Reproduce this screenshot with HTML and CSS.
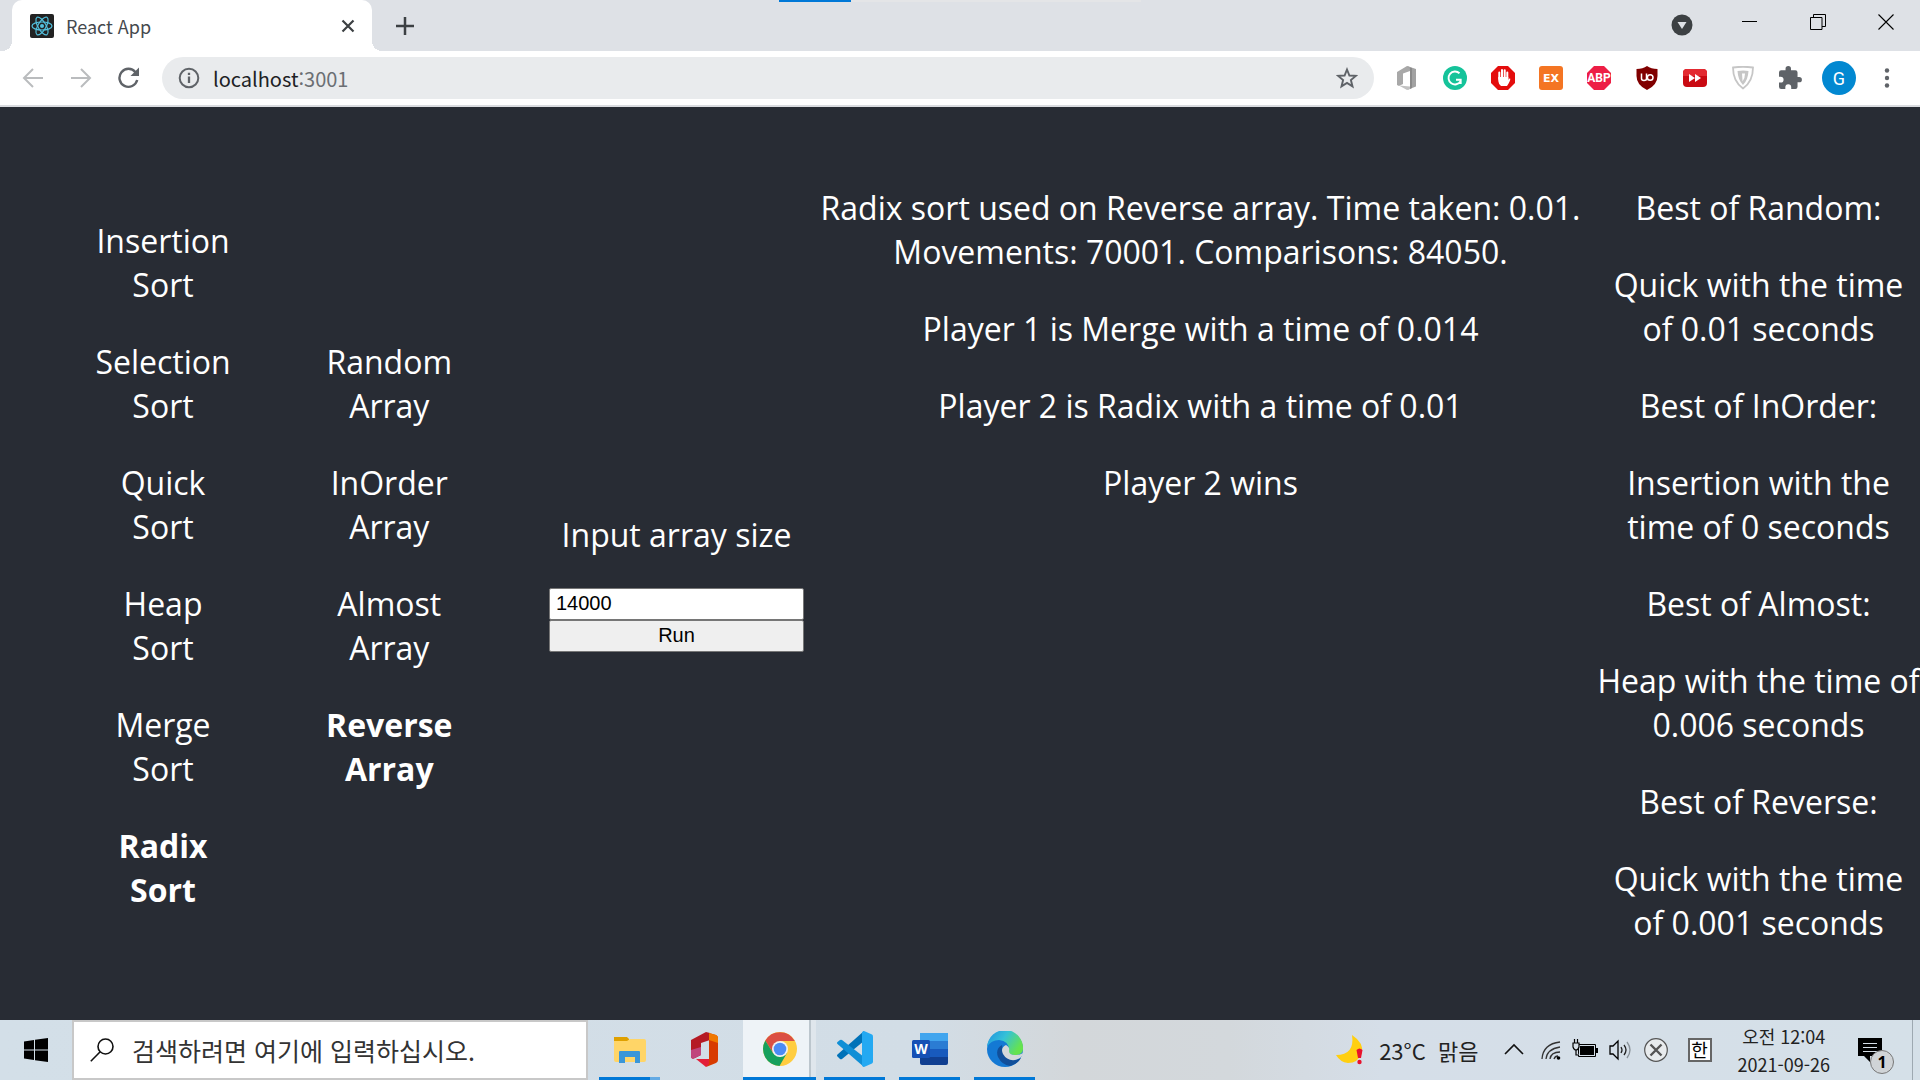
FILE: index.html
```html
<!DOCTYPE html>
<html lang="ko">
<head>
<meta charset="utf-8">
<title>React App</title>
<meta name="viewport" content="width=device-width, initial-scale=1">
<link rel="stylesheet" href="styles.css">
</head>
<body>
<div class="desktop">

<header class="browser">
  <div class="tabstrip">
    <div class="tab">
      <svg class="favicon" viewBox="0 0 24 24" aria-hidden="true"><rect width="24" height="24" rx="2" fill="#222"/><g fill="none" stroke="#53c1de" stroke-width="1.2"><ellipse cx="12" cy="12" rx="10" ry="4"/><ellipse cx="12" cy="12" rx="10" ry="4" transform="rotate(60 12 12)"/><ellipse cx="12" cy="12" rx="10" ry="4" transform="rotate(120 12 12)"/></g><circle cx="12" cy="12" r="2" fill="#53c1de"/></svg>
      <span class="tab-title">React App</span>
      <button class="icon-button" aria-label="Close tab"><svg width="14" height="14" viewBox="0 0 14 14"><path d="M1.500 1.500l11 11M12.500 1.500l-11 11" stroke="#3c4043" stroke-width="2.200" fill="none"/></svg></button>
    </div>
    <button class="icon-button new-tab" aria-label="New tab"><svg width="18" height="18" viewBox="0 0 18 18"><path d="M9 0v18M0 9h18" stroke="#3c4043" stroke-width="2.500"/></svg></button>
    <div class="load-bar"></div>
    <div class="window-controls">
      <button class="icon-button" aria-label="Search tabs"><svg width="22" height="22" viewBox="0 0 22 22"><circle cx="11" cy="11" r="10.500" fill="#3c4043"/><path d="M6.500 8h9l-4.500 7z" fill="#dee1e6"/></svg></button>
      <button class="icon-button" aria-label="Minimize"><svg width="16" height="16" viewBox="0 0 16 16"><path d="M0 7.500h15" stroke="#000"/></svg></button>
      <button class="icon-button" aria-label="Restore"><svg width="16" height="16" viewBox="0 0 16 16"><path d="M.5 3.500h11.500v12H.5zM3.500 3.500V.5h12v12h-3.500" stroke="#000" fill="none"/></svg></button>
      <button class="icon-button" aria-label="Close window"><svg width="16" height="16" viewBox="0 0 16 16"><path d="M.5.5l15 15M15.500.5l-15 15" stroke="#000" stroke-width="1.100"/></svg></button>
    </div>
  </div>

  <div class="toolbar">
    <nav class="nav-buttons">
      <button class="icon-button" aria-label="Back"><svg width="22" height="20" viewBox="0 0 22 20"><path d="M21 10H2M11 1L2 10l9 9" stroke="#babcbe" stroke-width="2" fill="none"/></svg></button>
      <button class="icon-button" aria-label="Forward"><svg width="22" height="20" viewBox="0 0 22 20"><path d="M1 10h19M11 1l9 9-9 9" stroke="#babcbe" stroke-width="2" fill="none"/></svg></button>
      <button class="icon-button" aria-label="Reload"><svg width="22" height="22" viewBox="0 0 22 22"><path d="M17.500 5.200A9 9 0 1 0 19.200 13" stroke="#5f6368" stroke-width="2.400" fill="none"/><path d="M21 .5V9h-8.500z" fill="#5f6368"/></svg></button>
    </nav>
    <div class="omnibox">
      <svg width="22" height="22" viewBox="0 0 22 22" aria-hidden="true"><circle cx="11" cy="11" r="9.300" fill="none" stroke="#5f6368" stroke-width="2"/><path d="M11 9.500v6.500M11 5.800v2.300" stroke="#5f6368" stroke-width="2.300"/></svg>
      <span class="url" role="textbox" aria-label="Address">localhost<span class="port">:3001</span></span>
      <button class="icon-button" aria-label="Bookmark"><svg width="22" height="22" viewBox="0 0 22 22"><path d="M11 2.500l2.400 6 6.400.4-4.900 4.200 1.600 6.300-5.500-3.500-5.500 3.500 1.600-6.300L2.200 8.900l6.400-.4z" fill="none" stroke="#5f6368" stroke-width="1.900"/></svg></button>
    </div>
    <div class="extensions">
      <button class="icon-button" aria-label="Office"><svg width="24" height="24" viewBox="0 0 24 24"><path d="M2 6L12 0l3 1v4L8 7.500V18l-4 2-2-1z" fill="#a8a8a8"/><path d="M12 0l9 3v17.500L12 24l3-3V4z" fill="#a2a2a2"/><path d="M15 1.500l2 .5v20l-2 1z" fill="#8a8a8a"/><path d="M4 19.500l11 1V23l-3 1z" fill="#c2c2c2"/></svg></button>
      <button class="icon-button" aria-label="Grammarly"><svg width="24" height="24" viewBox="0 0 24 24"><circle cx="12" cy="12" r="12" fill="#15c39a"/><path d="M16.500 7.200A6.500 6.500 0 1 0 17.600 15.300M13 13.700h4.700V18" fill="none" stroke="#fff" stroke-width="1.900"/></svg></button>
      <button class="icon-button" aria-label="AdBlock"><svg width="24" height="24" viewBox="0 0 24 24"><path d="M7 0h10l7 7v10l-7 7H7l-7-7V7z" fill="#e40d0d"/><path d="M8.300 13V6.500M11 12V4M13.700 12V4.300M16.300 13V6.500" stroke="#fff" stroke-width="2" stroke-linecap="round"/><path d="M7.300 11h10l0 3q1-2 2-1.200 0 2.500-3.300 7.200h-6Q7.500 18 7.300 15z" fill="#fff"/></svg></button>
      <button class="icon-button" aria-label="EX"><svg width="24" height="24" viewBox="0 0 24 24"><rect width="24" height="24" rx="3" fill="#f47523"/><text x="12" y="16" text-anchor="middle" class="glyph glyph-ex">EX</text></svg></button>
      <button class="icon-button" aria-label="Adblock Plus"><svg width="24" height="24" viewBox="0 0 24 24"><path d="M7 0h10l7 7v10l-7 7H7l-7-7V7z" fill="#ed1e45"/><text x="12" y="16" text-anchor="middle" class="glyph glyph-abp">ABP</text></svg></button>
      <button class="icon-button" aria-label="uBlock Origin"><svg width="24" height="24" viewBox="0 0 24 24"><path d="M12 0q4 3 10.500 3v7q0 9-10.500 14Q1.500 19 1.500 10V3Q8 3 12 0z" fill="#800000"/><path d="M6.500 7.500v5q0 2 2.500 2t2.500-2v-5M11.500 7.500v7" fill="none" stroke="#fff" stroke-width="1.500"/><circle cx="15.200" cy="11.500" r="2.800" fill="none" stroke="#fff" stroke-width="1.500"/></svg></button>
      <button class="icon-button" aria-label="Skip"><svg width="24" height="24" viewBox="0 0 24 24"><rect y="3" width="24" height="18" rx="4" fill="#c90a12"/><path d="M4 3h16q4 0 4 4v3H0V7q0-4 4-4z" fill="#e32a31"/><path d="M6 8l6 4-6 4zM12 8l6 4-6 4z" fill="#fff"/></svg></button>
      <button class="icon-button" aria-label="Security"><svg width="24" height="24" viewBox="0 0 24 24"><path d="M2 1.500q10-1.500 20 0 0 14-10 21Q2 15.500 2 1.500z" fill="#fff" stroke="#c6c6c6" stroke-width="1.800"/><path d="M6.500 5q6-1 11 0-.5 9-5.500 14Q7 14 6.500 5z" fill="#c6c6c6"/><path d="M11 7.500l3 0q0 5-2.500 8z" fill="#fff"/></svg></button>
      <button class="icon-button" aria-label="Extensions"><svg width="24" height="24" viewBox="2 1 22 22"><path d="M20.500 11H19V7a2 2 0 0 0-2-2h-4V3.500a2.500 2.500 0 0 0-5 0V5H4a2 2 0 0 0-2 2v3.800h1.500a2.700 2.700 0 0 1 0 5.400H2V20a2 2 0 0 0 2 2h3.800v-1.500a2.700 2.700 0 0 1 5.400 0V22H17a2 2 0 0 0 2-2v-4h1.500a2.500 2.500 0 0 0 0-5z" fill="#5f6368"/></svg></button>
      <button class="profile" aria-label="Profile">G</button>
      <button class="icon-button" aria-label="Menu"><svg width="24" height="24" viewBox="0 0 24 24"><g fill="#5f6368"><circle cx="12" cy="4.500" r="2.200"/><circle cx="12" cy="12" r="2.200"/><circle cx="12" cy="19.500" r="2.200"/></g></svg></button>
    </div>
  </div>
</header>

<main class="app">
  <section class="choices" aria-label="Sort">
    <p>Insertion<br>Sort</p>
    <p>Selection<br>Sort</p>
    <p>Quick<br>Sort</p>
    <p>Heap<br>Sort</p>
    <p>Merge<br>Sort</p>
    <p class="chosen">Radix<br>Sort</p>
  </section>
  <section class="choices" aria-label="Array">
    <p>Random<br>Array</p>
    <p>InOrder<br>Array</p>
    <p>Almost<br>Array</p>
    <p class="chosen">Reverse<br>Array</p>
  </section>
  <form class="run-form">
    <label for="array-size">Input array size</label>
    <input id="array-size" type="text" value="14000">
    <button type="button">Run</button>
  </form>
  <section class="result">
    <p>Radix sort used on Reverse array. Time taken: 0.01.<br>Movements: 70001. Comparisons: 84050.</p>
    <p>Player 1 is Merge with a time of 0.014</p>
    <p>Player 2 is Radix with a time of 0.01</p>
    <p>Player 2 wins</p>
  </section>
  <section class="best">
    <p>Best of Random:</p>
    <p>Quick with the time<br>of 0.01 seconds</p>
    <p>Best of InOrder:</p>
    <p>Insertion with the<br>time of 0 seconds</p>
    <p>Best of Almost:</p>
    <p>Heap with the time of<br>0.006 seconds</p>
    <p>Best of Reverse:</p>
    <p>Quick with the time<br>of 0.001 seconds</p>
  </section>
</main>

<footer class="taskbar">
  <button class="start" aria-label="Start"><svg width="24" height="24" viewBox="0 0 24 24"><path d="M0 3.500L10 2v9.500H0zM11 1.800L24 0v11.500H11zM0 12.500h10V22L0 20.500zM11 12.500h13V24l-13-1.800z"/></svg></button>
  <div class="search">
    <svg width="24" height="24" viewBox="0 0 24 24" aria-hidden="true"><circle cx="15.500" cy="8.500" r="7.500" fill="none" stroke="#111" stroke-width="1.600"/><path d="M10.200 13.800L.8 23.200" stroke="#111" stroke-width="1.600"/></svg>
    <input type="text" aria-label="검색" placeholder="검색하려면 여기에 입력하십시오.">
  </div>
  <div class="tasks">
    <button class="task running stacked" aria-label="File Explorer"><svg width="36" height="36" viewBox="0 0 36 36"><path d="M2 6h13l2 2v6H2z" fill="#dfa000"/><path d="M2 10h13l3-2h14q2 0 2 2v19q0 2-2 2H4q-2 0-2-2z" fill="#ffd567"/><path d="M7 32V21q0-1 1-1h19q1 0 1 1v11h-5v-6H13v6z" fill="#3a96d8"/></svg></button>
    <button class="task" aria-label="Office"><svg width="36" height="36" viewBox="0 0 36 36"><path d="M4 9L19 1l4 1v7l-9 3v12l-6 3q-4 2-4-2z" fill="#b51a24"/><path d="M4 19l10-3v8l-6 3q-4 2-4-2z" fill="#c0457c"/><path d="M22 2l7 2q2 1 2 3v22q0 2-2 3l-10 4 3-5z" fill="#d83b01"/><path d="M22 2l7 2q2 1 2 3v5l-9-3z" fill="#f07800"/><path d="M9 28h13v5l-3 3z" fill="#e31e38"/></svg></button>
    <button class="task running active" aria-label="Chrome"><svg width="36" height="36" viewBox="0 0 36 36"><circle cx="18" cy="18" r="17" fill="#ffcd40"/><path d="M18 10h14.800A17 17 0 0 0 3.300 9.500L11 22z" fill="#db4f43"/><path d="M3.300 9.500A17 17 0 0 0 17.500 35L25 22l-7 4-7-4z" fill="#16a05d"/><circle cx="18" cy="18" r="8" fill="#f1f1f1"/><circle cx="18" cy="18" r="6.300" fill="#4c8bf5"/></svg></button>
    <button class="task running" aria-label="Visual Studio Code"><svg width="36" height="36" viewBox="0 0 36 36"><path d="M27 0v10L5 28q-1 .5-2 0l-2.500-2.500q-1-1 0-2z" fill="#0072b8"/><path d="M27 36V26L5 9q-1-.5-2 0L.5 11q-1 1 0 2z" fill="#0f8fd6"/><path d="M27 0l8 3.500q1 .5 1 2v25q0 1.500-1 2L27 36l-2-1V1z" fill="#24a9f2"/></svg></button>
    <button class="task running" aria-label="Word"><svg width="36" height="36" viewBox="0 0 36 36"><path d="M8 2h28v9H8z" fill="#41a5ee"/><path d="M8 10h28v8H8z" fill="#2b7cd3"/><path d="M8 18h28v8H8z" fill="#185abd"/><path d="M8 26h28v6q0 2-2 2H10q-2 0-2-2z" fill="#103f91"/><rect y="9" width="18" height="18" rx="1.500" fill="#1650b5"/><text x="9" y="22.500" text-anchor="middle" class="glyph glyph-word">W</text></svg></button>
    <button class="task running" aria-label="Edge"><svg width="36" height="36" viewBox="0 0 36 36"><defs><linearGradient id="edge-top" x1="0" x2="1" y1="0" y2=".5"><stop offset="0" stop-color="#1f8fe0"/><stop offset=".5" stop-color="#35c1d8"/><stop offset="1" stop-color="#66e34e"/></linearGradient></defs><circle cx="18" cy="18" r="18" fill="#1479d4"/><path d="M0 16A18 18 0 0 1 36 18q0 6-8 6-8 0-6-5 0-9-10-10Q4 9 0 16z" fill="url(#edge-top)"/><path d="M15 14q-7 4-4 12 4 8 12 9 8-2 11-8-6 3-11 1-8-4-8-14z" fill="#114f9a"/><path d="M19 14q-6 3-3 9 4 7 12 6 4-1 5-2 2-1 3-5-3 2-8 2-6 0-6-4 1-4-3-6z" fill="#d4d8da"/></svg></button>
  </div>
  <div class="tray">
    <button class="weather"><svg width="28" height="30" viewBox="0 0 28 30" aria-hidden="true"><path d="M16 0q12 8 10 18-4 10-14 10-8-1-12-8 19 0 16-20z" fill="#ffcf10"/><path d="M20.500 15q3-3 6 0l-1.500 8h-3z" fill="#e8112d"/><circle cx="23.500" cy="27" r="2.200" fill="#e8112d"/></svg><span>23°C&nbsp; 맑음</span></button>
    <div class="status">
      <svg class="more" width="20" height="24" viewBox="0 0 20 24"><path d="M1 16l9-9 9 9" fill="none" stroke="#111" stroke-width="1.600"/></svg>
      <svg width="20" height="24" viewBox="0 0 20 24"><g fill="none" stroke="#333" stroke-width="1.300"><path d="M1 21Q2 6 19 4M5 21Q6 11 19 9M9 21q1-7 10-7M13 21q1-3 4-3"/></g><circle cx="17.500" cy="20" r="1.800"/></svg>
      <svg width="26" height="24" viewBox="0 0 26 24"><path d="M6.500 6.500h17v12h-17z" fill="none" stroke="#000"/><path d="M8 8h14v9H8z"/><path d="M24 10h2v5h-2z"/><path d="M1 5h6v4q-1 3-3 3t-3-3zM2.500 5V1M5.500 5V1M4 12v5h3" fill="#d5dee6" stroke="#000" stroke-width="1.200"/></svg>
      <svg width="24" height="24" viewBox="0 0 24 24"><path d="M1 8h3l5-5v18l-5-5H1z" fill="none" stroke="#000" stroke-width="1.300"/><path d="M12 9q2 3 0 6M15 7q4 5 0 10" fill="none" stroke="#222" stroke-width="1.300"/><path d="M18 4q6 8 0 16" fill="none" stroke="#8a9299" stroke-width="1.300"/></svg>
      <svg width="24" height="24" viewBox="0 0 24 24"><circle cx="12" cy="12" r="11.300" fill="#e8ebed" stroke="#555" stroke-width="1.200"/><path d="M6.500 6.500l11 11M17.500 6.500l-11 11" stroke="#555" stroke-width="2.400"/></svg>
    </div>
    <button class="ime" aria-label="Input language">한</button>
    <time class="clock" datetime="2021-09-26T00:04">오전 12:04<br>2021-09-26</time>
    <button class="notices" aria-label="Notifications"><svg width="24" height="24" viewBox="0 0 24 24"><path d="M0 0h24v18H12v6l-6-6H0z"/><path d="M5 5.500h14M5 9.500h14M5 13.500h14" stroke="#d5dee6"/></svg><span class="count">1</span></button>
  </div>
</footer>

</div>
</body>
</html>
```
FILE: styles.css
```css
* { box-sizing: border-box; }

body {
  margin: 0;
  font-family: "Open Sans", "Noto Sans CJK KR", sans-serif;
  color: #fff;
}

button {
  font: inherit;
  border: 0;
  padding: 0;
  background: none;
  color: inherit;
}

svg { display: block; flex: none; }

.desktop {
  min-height: 100vh;
  display: flex;
  flex-direction: column;
  overflow: hidden;
  background: #282c34;
}

/* Browser frame */
.tabstrip {
  position: relative;
  display: flex;
  height: 51px;
  padding-left: 12px;
  background: #dee1e6;
}

.tab {
  position: relative;
  display: flex;
  align-items: center;
  gap: 12px;
  width: 360px;
  padding: 0 17px 0 18px;
  border-radius: 10px 10px 0 0;
  background: #fff;
  color: #45494d;
  font-family: "Noto Sans CJK KR", sans-serif;
  font-size: 18px;
  line-height: 24px;
}

/* Flared feet of the active tab */
.tab::before,
.tab::after {
  content: "";
  position: absolute;
  bottom: 0;
  width: 10px;
  height: 10px;
}

.tab::before { right: 100%; background: radial-gradient(circle at 0 0, transparent 10px, #fff 10px); }
.tab::after { left: 100%; background: radial-gradient(circle at 100% 0, transparent 10px, #fff 10px); }

.favicon { width: 24px; height: 24px; }
.tab-title { flex: 1; }

.icon-button {
  display: flex;
  align-items: center;
  justify-content: center;
}

.new-tab { margin-left: 24px; }

.load-bar {
  position: absolute;
  top: 0;
  left: 779px;
  width: 362px;
  height: 2px;
  background: linear-gradient(90deg, #0078d7 72px, #e4e5e7 72px);
}

.window-controls {
  display: flex;
  align-items: center;
  height: 44px;
  margin-left: auto;
}

.window-controls .icon-button { width: 68px; }
.window-controls .icon-button:first-child { padding-top: 6px; }

.toolbar {
  display: flex;
  align-items: center;
  height: 56px;
  padding: 0 21px 0 22px;
  border-bottom: 2px solid #dadce0;
  background: #fff;
}

.nav-buttons { display: flex; gap: 26px; width: 140px; }

.omnibox {
  flex: 1;
  display: flex;
  align-items: center;
  gap: 13px;
  height: 42px;
  padding: 0 16px;
  border-radius: 21px;
  background: #e9ebed;
}

.url {
  flex: 1;
  color: #202124;
  font-family: "Noto Sans CJK KR", sans-serif;
  font-size: 20px;
}

.port { color: #6b6f74; }

.extensions {
  display: flex;
  align-items: center;
  gap: 24px;
  padding-left: 21px;
}

.profile {
  width: 34px;
  height: 34px;
  margin: 0 -5px;
  border-radius: 50%;
  background: #0288d1;
  font-family: Roboto, sans-serif;
  font-size: 18px;
}

.glyph { fill: #fff; font-family: "Open Sans", sans-serif; font-weight: 700; }
.glyph-ex { font-family: "DejaVu Sans", sans-serif; font-size: 11px; }
.glyph-abp { font-family: Roboto, sans-serif; font-size: 12px; }
.glyph-word { font-size: 14px; }

/* Page */
.app {
  flex: 1;
  display: grid;
  grid-template-columns: minmax(0, 326fr) minmax(0, 126fr) minmax(0, 352fr) minmax(0, 793fr) minmax(0, 323fr);
  align-content: center;
  align-items: center;
  padding-top: 4px;
  font-size: 32px;
  line-height: 44px;
  text-align: center;
  white-space: nowrap;
}

.app section { display: grid; gap: 33px; }
.app p { margin: 0; }
.app .result { align-self: start; }
.chosen { font-weight: 700; }

.run-form {
  display: grid;
  padding: 33px 0 0 97px;
}

.run-form label { margin-bottom: 31px; }

.run-form input,
.run-form button {
  width: 100%;
  height: 32px;
  padding: 0 6px;
  border: 1px solid #767676;
  border-radius: 2px;
  background: #fff;
  color: #000;
  font: 20px "Liberation Sans", sans-serif;
}

.run-form button { background: #efefef; }

/* Taskbar */
.taskbar {
  display: flex;
  height: 60px;
  background: linear-gradient(90deg, #d3dfe8 0%, #d2dde6 48%, #d3d7da 56%, #d3d8dc 64%, #d5dee8 72%, #d5e0e8 100%);
  color: #000;
}

.start {
  display: grid;
  place-items: center;
  width: 72px;
}

.search {
  display: flex;
  align-items: center;
  gap: 18px;
  width: 516px;
  padding: 0 16px;
  border: 2px solid #c8c8c8;
  background: #fff;
}

.search input {
  flex: 1;
  min-width: 0;
  border: 0;
  padding: 0;
  background: none;
  font: 25px "Noto Sans CJK KR", sans-serif;
}

.search input::placeholder { color: #333; opacity: 1; }

.tasks { display: flex; gap: 14px; padding-left: 11px; }

.task {
  display: grid;
  place-items: center;
  width: 61px;
  border-bottom: 3px solid transparent;
}

.running { border-color: #0078d7; }
.stacked { border-image: linear-gradient(90deg, #0078d7 80%, #63aae4 80%) 3; }
.active { width: 73px; margin: 0 -6px; background: linear-gradient(90deg, #eef3f7 66px, #bcc6cd 66px 68px, #dfe6ec 68px); }

.tray {
  display: flex;
  align-items: center;
  margin-left: auto;
  padding-right: 7px;
}

.tray::after {
  content: "";
  align-self: stretch;
  width: 1px;
  background: #9ea9b1;
}

.weather {
  display: flex;
  align-items: center;
  gap: 15px;
  font-family: "Noto Sans CJK KR", sans-serif;
  font-size: 22px;
  color: #222;
}

.status { display: flex; gap: 11px; margin-left: 25px; }
.more { margin-right: 6px; }

.ime {
  display: grid;
  place-items: center;
  width: 24px;
  height: 24px;
  margin-left: 20px;
  border: 2px solid #666;
  background: #fff;
  font-size: 18px;
  line-height: 20px;
}

.clock {
  margin: 0 28px 0 26px;
  font-family: "Noto Sans CJK KR", sans-serif;
  font-size: 18px;
  line-height: 28px;
  text-align: center;
  color: #222;
}

.notices { position: relative; margin-right: 30px; }

.count {
  position: absolute;
  left: 12px;
  top: 12px;
  width: 24px;
  height: 24px;
  border: 1px solid #777;
  border-radius: 50%;
  background: #d0d4d7;
  font-size: 16px;
  font-weight: 700;
  line-height: 22px;
}
```
